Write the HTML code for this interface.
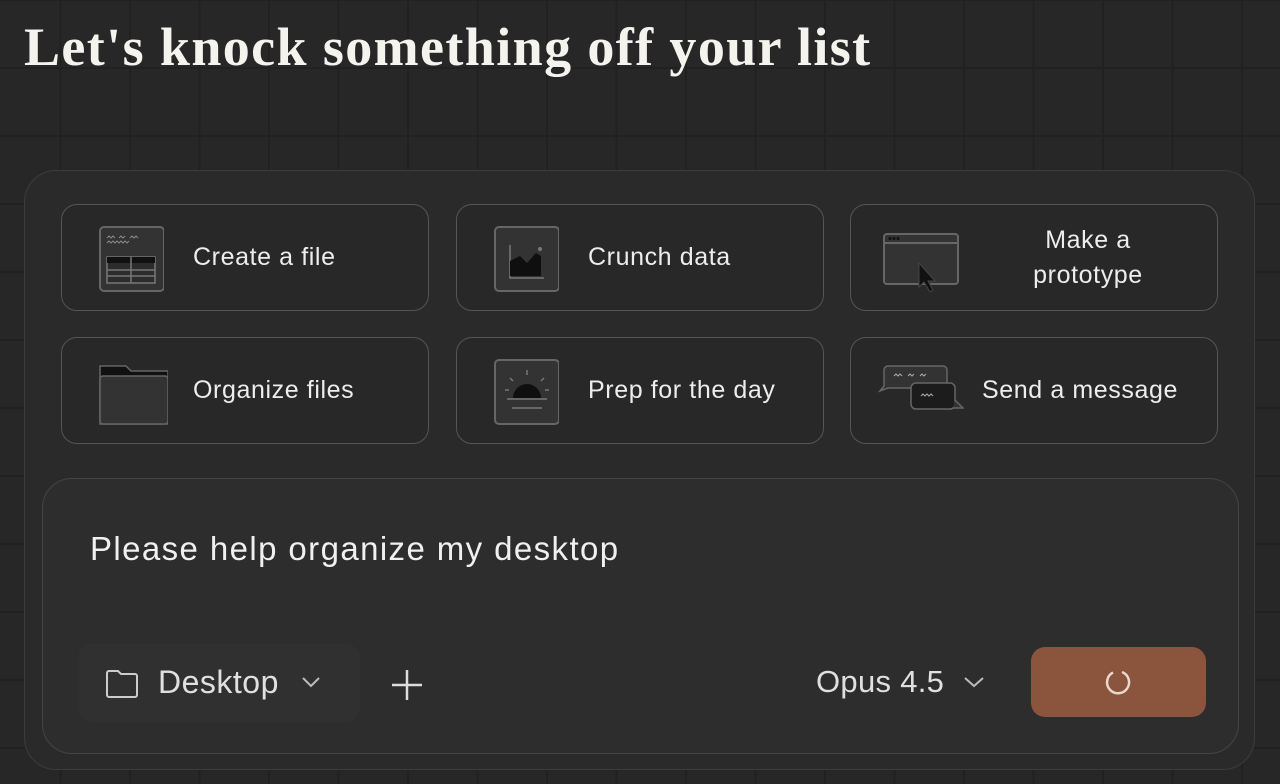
<!DOCTYPE html>
<html><head><meta charset="utf-8"><style>
*{box-sizing:border-box;margin:0;padding:0}
body{width:1280px;height:784px;overflow:hidden;background:#272727;position:relative;font-family:"Liberation Sans",sans-serif;color:#ececec;
background-image:linear-gradient(to right,#212121 2px,transparent 2px),linear-gradient(to bottom,#212121 2px,transparent 2px);
background-size:69.5px 68px;background-position:-10px -1px}
h1{position:absolute;left:24px;top:16px;font-family:"Liberation Serif",serif;font-weight:700;font-size:54px;color:#f5f3ee;letter-spacing:1.4px;white-space:nowrap}
.outer{position:absolute;left:24px;top:170px;width:1231px;height:600px;border:1.5px solid #3c3c3c;border-radius:32px;background:#2a2a2a}
.card{position:absolute;width:368px;height:107px;border:1.5px solid #555;border-radius:16px;background:#282828;display:flex;align-items:center}
.card .ic{position:absolute;left:34px;top:20px;width:68px;height:68px}
.card span{position:absolute;left:131px;font-size:25px;letter-spacing:0.6px;color:#ededed;white-space:nowrap}
.input{position:absolute;left:42px;top:478px;width:1197px;height:276px;border:1.5px solid #444;border-radius:30px;background:#2d2d2d}
.ph{position:absolute;left:47px;top:51px;font-size:33px;letter-spacing:1.4px;color:#f0f0f0;white-space:nowrap}
.dk{position:absolute;left:35px;top:165px;width:282px;height:78px;border-radius:14px;background:#303030}
.send{position:absolute;left:988px;top:168px;width:175px;height:70px;border-radius:14px;background:#8a543d}
</style></head><body>
<h1>Let's knock something off your list</h1>
<div class="outer"></div>

<div class="card" style="left:61px;top:204px">
<svg class="ic" viewBox="0 0 68 68"><rect x="4" y="2" width="64" height="64" rx="4" fill="#333" stroke="#666" stroke-width="2"/>
<path d="M11 13l2-2 2 2 2-2 2 2 M23 13l2-2 2 2 2-2 M34 13l2-2 2 2 2-2 2 2 M11 18l2-2 2 2 2-2 2 2 2-2 2 2 2-2 2 2 2-2 2 2 2-2" stroke="#888" fill="none" stroke-width="1"/>
<rect x="11" y="32" width="48" height="26" fill="#2c2c2c" stroke="#777" stroke-width="1.5"/><rect x="11" y="32" width="48" height="6" fill="#111"/>
<path d="M35 32v26 M11 45h48 M11 51h48" stroke="#777" stroke-width="1.5"/></svg>
<span>Create a file</span></div>

<div class="card" style="left:456px;top:204px">
<svg class="ic" viewBox="0 0 68 68"><rect x="4" y="2" width="64" height="64" rx="4" fill="#333" stroke="#666" stroke-width="2"/>
<path d="M19 20v33h34" stroke="#777" fill="none" stroke-width="1.5"/><path d="M19 36l10-5 7 7 9-10 5 3v20H19z" fill="#0f0f0f"/><circle cx="49" cy="24" r="2" fill="#777"/></svg>
<span>Crunch data</span></div>

<div class="card" style="left:850px;top:204px">
<svg class="ic" viewBox="0 0 80 68" style="left:30px;width:80px"><rect x="3" y="9" width="74" height="50" rx="3" fill="#333" stroke="#666" stroke-width="2"/><path d="M3 18h74" stroke="#666" stroke-width="2"/>
<circle cx="9" cy="13.5" r="1.5" fill="#111"/><circle cx="13" cy="13.5" r="1.5" fill="#111"/><circle cx="17" cy="13.5" r="1.5" fill="#111"/>
<path d="M38 38v24l5-5 6 10 3-2-5-9h7z" fill="#111" stroke="#444"/></svg>
<span style="left:177px;width:120px;text-align:center;line-height:35px">Make a<br>prototype</span></div>

<div class="card" style="left:61px;top:337px">
<svg class="ic" viewBox="0 0 68 68" style="width:72px"><path d="M2 8h26l5 5h37v53H2z" fill="#111" stroke="#666" stroke-width="1.5"/><rect x="2" y="18" width="68" height="48" rx="3" fill="#333" stroke="#666" stroke-width="1.5"/></svg>
<span>Organize files</span></div>

<div class="card" style="left:456px;top:337px">
<svg class="ic" viewBox="0 0 68 68"><rect x="4" y="2" width="64" height="64" rx="4" fill="#333" stroke="#666" stroke-width="2"/>
<path d="M22 40a14 14 0 0 1 28 0z" fill="#0f0f0f"/><path d="M36 12v5 M19 20l3 3 M53 20l-3 3 M14 32h4 M54 32h4 M16 41h40 M21 50h30" stroke="#777" stroke-width="1.5"/></svg>
<span>Prep for the day</span></div>

<div class="card" style="left:850px;top:337px">
<svg class="ic" viewBox="0 0 86 68" style="left:27px;width:86px"><path d="M10 8h55a4 4 0 0 1 4 4v14a4 4 0 0 1-4 4H10l-8 3 4-5V12a4 4 0 0 1 4-4z" fill="#333" stroke="#666" stroke-width="1.5"/>
<path d="M16 18l2-2 2 2 2-2 2 2 M30 18l2-2 2 2 2-2 M42 18l2-2 2 2 2-2" stroke="#aaa" fill="none"/>
<rect x="33" y="25" width="44" height="26" rx="5" fill="#1c1c1c" stroke="#666" stroke-width="1.5"/><path d="M77 42l8 8h-10" fill="#333" stroke="#666" stroke-width="1.5"/>
<path d="M43 38l2-2 2 2 2-2 2 2 2-2 2 2" stroke="#aaa" fill="none"/></svg>
<span>Send a message</span></div>

<div class="input">
<div class="ph">Please help organize my desktop</div>
<div class="dk"></div>
<svg style="position:absolute;left:62px;top:188px" width="36" height="32" viewBox="0 0 36 32"><path d="M2 6a2 2 0 0 1 2-2h9l3 3h14a2 2 0 0 1 2 2v19a2 2 0 0 1-2 2H4a2 2 0 0 1-2-2z" fill="none" stroke="#ccc" stroke-width="2"/></svg>
<div style="position:absolute;left:115px;top:185px;font-size:32px;letter-spacing:0.5px;color:#e0e0e0">Desktop</div>
<svg style="position:absolute;left:258px;top:197px" width="20" height="12"><path d="M2 2l8 8 8-8" fill="none" stroke="#bbb" stroke-width="2"/></svg>
<svg style="position:absolute;left:347px;top:189px" width="34" height="34"><path d="M17 2v30M2 17h30" stroke="#ddd" stroke-width="2.5"/></svg>
<div style="position:absolute;left:773px;top:185px;font-size:31px;letter-spacing:0.3px;color:#e0e0e0">Opus 4.5</div>
<svg style="position:absolute;left:920px;top:197px" width="22" height="12"><path d="M2 2l9 8 9-8" fill="none" stroke="#bbb" stroke-width="2"/></svg>
<div class="send"><svg style="position:absolute;left:72px;top:21px" width="30" height="30"><path d="M10 4.5A11 11 0 1 0 19 4" fill="none" stroke="#e8d8cf" stroke-width="2.5"/></svg></div>
</div>
</body></html>
